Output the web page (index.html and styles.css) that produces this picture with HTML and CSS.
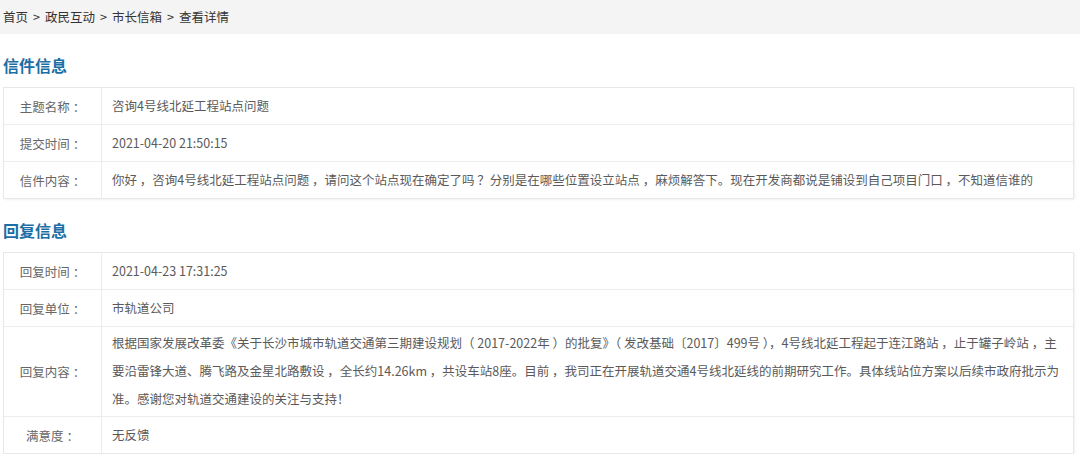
FILE: index.html
```html
<!DOCTYPE html>
<html lang="zh-CN">
<head>
<meta charset="utf-8">
<title>查看详情</title>
<link rel="stylesheet" href="styles.css">
</head>
<body>
<div class="crumb">首页<span class="sep">&gt;</span>政民互动<span class="sep">&gt;</span>市长信箱<span class="sep">&gt;</span>查看详情</div>
<div class="page">
  <h2 class="sec-title">信件信息</h2>
  <div class="table">
    <div class="row"><div class="label">主题名称 ：</div><div class="value">咨询4号线北延工程站点问题</div></div>
    <div class="row"><div class="label">提交时间 ：</div><div class="value">2021-04-20 21:50:15</div></div>
    <div class="row"><div class="label">信件内容 ：</div><div class="value">你好 ，咨询4号线北延工程站点问题 ，请问这个站点现在确定了吗 ？分别是在哪些位置设立站点 ，麻烦解答下。现在开发商都说是铺设到自己项目门口 ，不知道信谁的</div></div>
  </div>
  <h2 class="sec-title">回复信息</h2>
  <div class="table">
    <div class="row"><div class="label">回复时间 ：</div><div class="value">2021-04-23 17:31:25</div></div>
    <div class="row"><div class="label">回复单位 ：</div><div class="value">市轨道公司</div></div>
    <div class="row"><div class="label">回复内容 ：</div><div class="value multi">根据国家发展改革委《关于长沙市城市轨道交通第三期建设规划（ 2017-2022年 ）的批复》（ 发改基础〔2017〕499号 ），4号线北延工程起于连江路站 ，止于罐子岭站 ，主<br>要沿雷锋大道、腾飞路及金星北路敷设 ，全长约14.26km ，共设车站8座。目前 ，我司正在开展轨道交通4号线北延线的前期研究工作。具体线站位方案以后续市政府批示为<br>准。感谢您对轨道交通建设的关注与支持！</div></div>
    <div class="row"><div class="label">满意度 ：</div><div class="value">无反馈</div></div>
  </div>
</div>
</body>
</html>
```
FILE: styles.css
```css
* { box-sizing: border-box; }
html, body { margin: 0; padding: 0; background: #fff; }
body {
  font-family: "Noto Sans CJK SC", "Noto Sans", sans-serif;
  font-size: 12.5px;
  color: #5a5a5a;
}
.crumb {
  height: 34px;
  line-height: 33px;
  background: #f4f4f4;
  color: #333;
  padding-left: 3px;
}
.crumb .sep { padding: 0 5px; }
.page { padding: 0 6px 0 3px; }
.sec-title {
  margin: 0;
  padding-top: 15px;
  line-height: 32px;
  font-size: 16px;
  font-weight: bold;
  color: #1c6ea6;
  margin-bottom: 6px;
}
.table {
  border: 1px solid #e8e8e8;
  box-shadow: 1px 1px 2px rgba(0,0,0,0.06);
}
.row {
  display: flex;
  border-top: 1px solid #ececec;
}
.row:first-child { border-top: none; }
.label {
  width: 98px;
  flex: none;
  border-right: 1px solid #ececec;
  color: #666;
  text-align: center;
  display: flex;
  align-items: center;
  justify-content: center;
}
.value {
  flex: 1;
  padding: 0 10px;
  line-height: 36px;
  color: #5a5a5a;
}
.value.multi {
  line-height: 28px;
  padding: 2px 0 3px 10px;
  white-space: nowrap;
}
```
